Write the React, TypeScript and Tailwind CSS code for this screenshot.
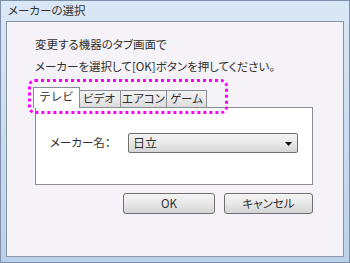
import { ChangeEvent, useState } from 'react';

const tabs = ['テレビ', 'ビデオ', 'エアコン', 'ゲーム'];

const font = "[font-family:'Noto_Sans_CJK_JP','Noto_Sans',sans-serif]";
const palt = "[font-feature-settings:'palt']";

export default function App() {
  const [active, setActive] = useState(0);
  const [maker, setMaker] = useState('日立');

  return (
    <div className={`w-[350px] h-[263px] flex flex-col border border-[#7d90a8] bg-gradient-to-b from-[#dae7f6] to-[#bad1ea] px-[5px] pb-[5px] text-[#303030] ${font}`}>
      {/* title bar */}
      <div className={`h-[20px] flex items-center pl-[2px] text-[11.5px] leading-none text-[#333] ${palt}`}>メーカーの選択</div>

      {/* client area */}
      <div className="relative flex-1 border border-[#8a96a6] bg-[#f5f3f7] pl-[28px] pt-[11px]">
        <p className={`text-[11.5px] leading-[22px] ${palt}`}>
          変更する機器のタブ画面で
          <br />
          メーカーを選択して[OK]ボタンを押してください。
        </p>

        {/* tabs */}
        <div className="mt-[10px] flex items-end h-[20px]">
          {tabs.map((t, i) =>
            i === active ? (
              <button
                key={t}
                onClick={() => setActive(i)}
                className="relative z-10 -ml-[2px] -mr-[2px] h-[21px] -mb-px w-[47px] border border-b-0 border-[#898c95] bg-white text-[11.5px] leading-none pb-[2px]"
              >
                {t}
              </button>
            ) : (
              <button
                key={t}
                onClick={() => setActive(i)}
                className={`h-[17px] border border-b-0 border-[#898c95] bg-gradient-to-b from-[#f3f3f3] to-[#dcdcdc] text-[11.5px] leading-none -ml-px first:ml-0 ${palt} ${
                  t === 'ビデオ' ? 'w-[44px]' : t === 'エアコン' ? 'w-[47px]' : 'w-[41px]'
                }`}
              >
                {t}
              </button>
            )
          )}
        </div>

        {/* tab panel */}
        <div className="w-[278px] h-[78px] border border-[#898c95] bg-white pl-[14px] pt-[25px]">
          <div className="flex items-center h-[20px]">
            <span className={`w-[78px] text-[11.5px] leading-none ${palt}`}>メーカー名：</span>
            <label className="relative w-[170px] h-[20px] rounded-[2px] border border-[#707070] bg-gradient-to-b from-[#f4f4f4] via-[#e8e8e8] to-[#d6d6d6] flex items-center pl-[4px]">
              <select
                value={maker}
                onChange={(e: ChangeEvent<HTMLSelectElement>) => setMaker(e.target.value)}
                className="absolute inset-0 opacity-0"
              >
                <option>日立</option>
                <option>東芝</option>
                <option>パナソニック</option>
              </select>
              <span className="text-[12px] leading-none">{maker}</span>
              <svg className="absolute right-[5px] top-[8px]" width="7" height="4" viewBox="0 0 7 4">
                <path d="M0 0h7L3.5 4z" fill="#111" />
              </svg>
            </label>
          </div>
        </div>

        {/* buttons */}
        <div className="mt-[8px] flex gap-[9px] pl-[88px]">
          <button className="w-[92px] h-[21px] rounded-[3px] border border-[#707070] bg-gradient-to-b from-[#f4f4f4] via-[#e8e8e8] to-[#d4d4d4] text-[11.5px] leading-none">
            OK
          </button>
          <button className={`w-[89px] h-[21px] rounded-[3px] border border-[#707070] bg-gradient-to-b from-[#f4f4f4] via-[#e8e8e8] to-[#d4d4d4] text-[11.5px] leading-none ${palt}`}>
            キャンセル
          </button>
        </div>

        {/* magenta highlight around the tabs */}
        <div className="absolute left-[21px] top-[57px] w-[200px] h-[35px] rounded-[7px] border-[3px] border-dotted border-[#ff00ff] pointer-events-none" />
      </div>
    </div>
  );
}
